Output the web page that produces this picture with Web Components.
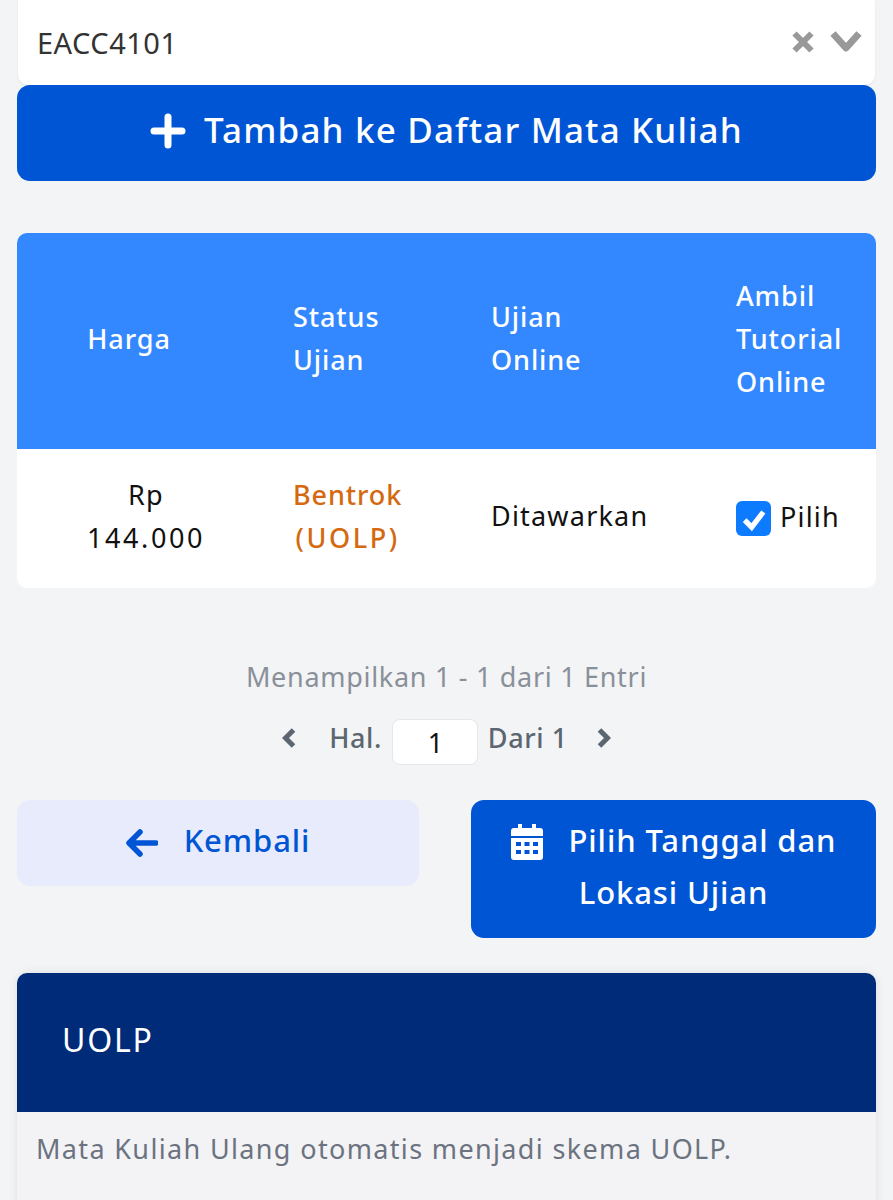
<!DOCTYPE html>
<html lang="id">
<head>
<meta charset="utf-8">
<title>Daftar Mata Kuliah</title>
<style>
	html, body { margin: 0; height: 1200px; overflow: hidden; }
	body {
		background: #f3f4f6;
		font-family: "Noto Sans", "Open Sans", sans-serif;
		font-weight: 500;
		display: flex;
		flex-direction: column;
		padding: 0 17px;
		box-sizing: border-box;
	}
	x-select { margin: 0 1px; }
	x-table { margin-top: 52px; }
	x-pager { margin-top: 70px; }
	x-actions { margin-top: 35px; }
	x-notice { margin-top: 35px; }
</style>
</head>
<body>
<x-select value="EACC4101"></x-select>
<x-button icon="plus" size="big">Tambah ke Daftar Mata Kuliah</x-button>
<x-table></x-table>
<x-pager></x-pager>
<x-actions></x-actions>
<x-notice title="UOLP">Mata Kuliah Ulang otomatis menjadi skema UOLP.</x-notice>

<script>
const ICONS = {
	plus: '<svg viewBox="0 0 36 36" width="36" height="36"><path d="M18 4v28M4 18h28" stroke="currentColor" stroke-width="7" stroke-linecap="round" fill="none"/></svg>',
	back: '<svg viewBox="0 0 32 28" width="32" height="28"><path d="M14 3 3 14l11 11M4 14h26" stroke="currentColor" stroke-width="5.5" stroke-linecap="round" stroke-linejoin="round" fill="none"/></svg>',
	calendar: '<svg viewBox="0 0 32 36" width="32" height="36"><path fill="currentColor" fill-rule="evenodd" d="M7 0h4v4h10V0h4v4h4a3 3 0 0 1 3 3v5H0V7a3 3 0 0 1 3-3h4zM0 14h32v19a3 3 0 0 1-3 3H3a3 3 0 0 1-3-3zM5 18v4h5v-4zm8.500 0v4h5v-4zM22 18v4h5v-4zM5 26v4h5v-4zm8.500 0v4h5v-4zM22 26v4h5v-4z"/></svg>'
};

class XSelect extends HTMLElement {
	constructor() {
		super();
		this.attachShadow({ mode: 'open' });
		this.shadowRoot.innerHTML = `
			<style>
				:host { display: block; }
				.box {
					height: 85px;
					box-sizing: border-box;
					background: #fff;
					border-radius: 0 0 10px 10px;
					box-shadow: 0 1px 2px #dde1e6;
					display: flex;
					align-items: center;
					justify-content: space-between;
					padding: 0 13px 0 19px;
					font-size: 29px;
					font-weight: 400;
					letter-spacing: .5px;
					color: #333;
				}
				.icons { display: flex; align-items: center; gap: 15px; margin-bottom: 2px; }
				svg { display: block; }
			</style>
			<div class="box">
				<span>${this.getAttribute('value')}</span>
				<div class="icons">
					<svg viewBox="0 0 24 24" width="24" height="24"><path d="M3.500 3.500l17 17M20.500 3.500l-17 17" stroke="#999" stroke-width="6" fill="none"/></svg>
					<svg viewBox="0 0 32 24" width="32" height="24"><path d="M3 3.500 16 18 29 3.500" stroke="#999" stroke-width="7" fill="none" stroke-linejoin="round"/></svg>
				</div>
			</div>`;
	}
}

class XButton extends HTMLElement {
	constructor() {
		super();
		this.attachShadow({ mode: 'open' });
		const icon = this.getAttribute('icon');

		this.shadowRoot.innerHTML = `
			<style>
				:host { display: block; }
				.btn {
					height: 96px;
					box-sizing: border-box;
					background: #0055d4;
					color: #fff;
					border-radius: 13px;
					display: flex;
					align-items: center;
					justify-content: center;
					gap: 18px;
					font-size: 35px;
					letter-spacing: 1.15px;
				}
				span { padding-bottom: 7px; }
				svg { display: block; margin-bottom: 4px; }
			</style>
			<div class="btn">${ICONS[icon]}<span><slot></slot></span></div>`;
	}
}

class XTable extends HTMLElement {
	constructor() {
		super();
		this.attachShadow({ mode: 'open' });
		this.shadowRoot.innerHTML = `
			<style>
				:host { display: block; }
				.wrap { border-radius: 10px; overflow: hidden; background: #fff; font-size: 27px; line-height: 43px; letter-spacing: .9px; }
				.row { display: grid; grid-template-columns: 258px 198px 245px 1fr; align-items: center; }
				.head { background: #3388ff; color: #fff; height: 216px; }
				.body { height: 139px; color: #111; font-weight: 400; letter-spacing: 1.2px; }
				.cell { padding: 0 0 6px 18px; }
				.first { padding: 0 34px 6px 0; text-align: center; }
				.first.data { padding: 0 0 6px; }
				.wide { letter-spacing: 2.6px; }
				.warn { color: #d4690f; font-weight: 500; letter-spacing: .9px; text-align: center; justify-self: start; }
				.check { display: flex; align-items: center; gap: 9px; padding-bottom: 0; }
				.check span:last-child { padding-bottom: 4px; }
				.box {
					width: 35px;
					height: 35px;
					background: #0d7bff;
					border-radius: 6px;
					display: flex;
					align-items: center;
					justify-content: center;
				}
				svg { display: block; }
			</style>
			<div class="wrap">
				<div class="row head">
					<div class="first">Harga</div>
					<div class="cell">Status<br>Ujian</div>
					<div class="cell">Ujian<br>Online</div>
					<div class="cell">Ambil<br>Tutorial<br>Online</div>
				</div>
				<div class="row body">
					<div class="first data">Rp<br><span class="wide">144.000</span></div>
					<div class="cell warn">Bentrok<br><span class="wide">(UOLP)</span></div>
					<div class="cell">Ditawarkan</div>
					<div class="cell check">
						<span class="box"><svg viewBox="0 0 24 24" width="28" height="28"><path d="M4 13l6 6L20 6" stroke="#fff" stroke-width="4.500" fill="none"/></svg></span>
						<span>Pilih</span>
					</div>
				</div>
			</div>`;
	}
}

class XPager extends HTMLElement {
	constructor() {
		super();
		this.attachShadow({ mode: 'open' });
		this.shadowRoot.innerHTML = `
			<style>
				:host { display: block; text-align: center; font-size: 27px; }
				.info { color: #8a9099; line-height: 38px; font-weight: 400; letter-spacing: .7px; }
				.nav {
					margin-top: 23px;
					display: flex;
					align-items: center;
					justify-content: center;
					color: #5c6670;
					height: 46px;
					letter-spacing: .6px;
				}
				.nav > span { padding-bottom: 9px; }
				.nav > .page {
					width: 86px;
					height: 46px;
					box-sizing: border-box;
					margin: 0 10px;
					padding: 0 0 0 2px;
					background: #fff;
					border: 1px solid #e5e7eb;
					border-radius: 8px;
					color: #111;
					font-weight: 400;
					display: flex;
					align-items: center;
					justify-content: center;
				}
				svg { display: block; margin-bottom: 9px; }
				.prev { margin-right: 33px; }
				.next { margin-left: 29px; }
			</style>
			<div class="info">Menampilkan 1 - 1 dari 1 Entri</div>
			<div class="nav">
				<svg class="prev" viewBox="0 0 14 20" width="14" height="20"><path d="M11.500 2 3.500 10l8 8" stroke="#5c6670" stroke-width="5" fill="none"/></svg>
				<span>Hal.</span>
				<span class="page">1</span>
				<span>Dari 1</span>
				<svg class="next" viewBox="0 0 14 20" width="14" height="20"><path d="M2.500 2l8 8-8 8" stroke="#5c6670" stroke-width="5" fill="none"/></svg>
			</div>`;
	}
}

class XActions extends HTMLElement {
	constructor() {
		super();
		this.attachShadow({ mode: 'open' });
		this.shadowRoot.innerHTML = `
			<style>
				:host { display: flex; justify-content: space-between; align-items: flex-start; font-size: 31px; letter-spacing: .9px; }
				.back {
					width: 402px;
					height: 86px;
					background: #e8ebfc;
					color: #0055d4;
					border-radius: 13px;
					display: flex;
					align-items: center;
					justify-content: center;
					gap: 26px;
				}
				.back span { padding-bottom: 6px; }
				.go {
					width: 405px;
					height: 138px;
					box-sizing: border-box;
					background: #0055d4;
					color: #fff;
					border-radius: 13px;
					text-align: center;
					line-height: 52px;
					padding-top: 14px;
				}
				.go svg { vertical-align: -8px; margin-right: 26px; }
				svg { flex: none; }
			</style>
			<div class="back">${ICONS.back}<span>Kembali</span></div>
			<div class="go">${ICONS.calendar}<span>Pilih Tanggal dan</span><br><span>Lokasi Ujian</span></div>`;
	}
}

class XNotice extends HTMLElement {
	constructor() {
		super();
		this.attachShadow({ mode: 'open' });
		this.shadowRoot.innerHTML = `
			<style>
				:host { display: block; }
				.card { border-radius: 10px 10px 0 0; box-shadow: 0 0 8px #dcdfe3; background: #f3f3f5; height: 240px; }
				.title {
					height: 139px;
					box-sizing: border-box;
					background: #002b78;
					color: #fff;
					border-radius: 10px 10px 0 0;
					padding: 0 0 6px 45px;
					display: flex;
					align-items: center;
					font-size: 32px;
					font-weight: 400;
					letter-spacing: 1.8px;
				}
				.text { padding: 17px 19px; color: #6b7280; font-size: 27px; font-weight: 400; line-height: 40px; letter-spacing: 1.35px; white-space: nowrap; }
			</style>
			<div class="card">
				<div class="title">${this.getAttribute('title')}</div>
				<div class="text"><slot></slot></div>
			</div>`;
	}
}

customElements.define('x-select', XSelect);
customElements.define('x-button', XButton);
customElements.define('x-table', XTable);
customElements.define('x-pager', XPager);
customElements.define('x-actions', XActions);
customElements.define('x-notice', XNotice);
</script>
</body>
</html>
